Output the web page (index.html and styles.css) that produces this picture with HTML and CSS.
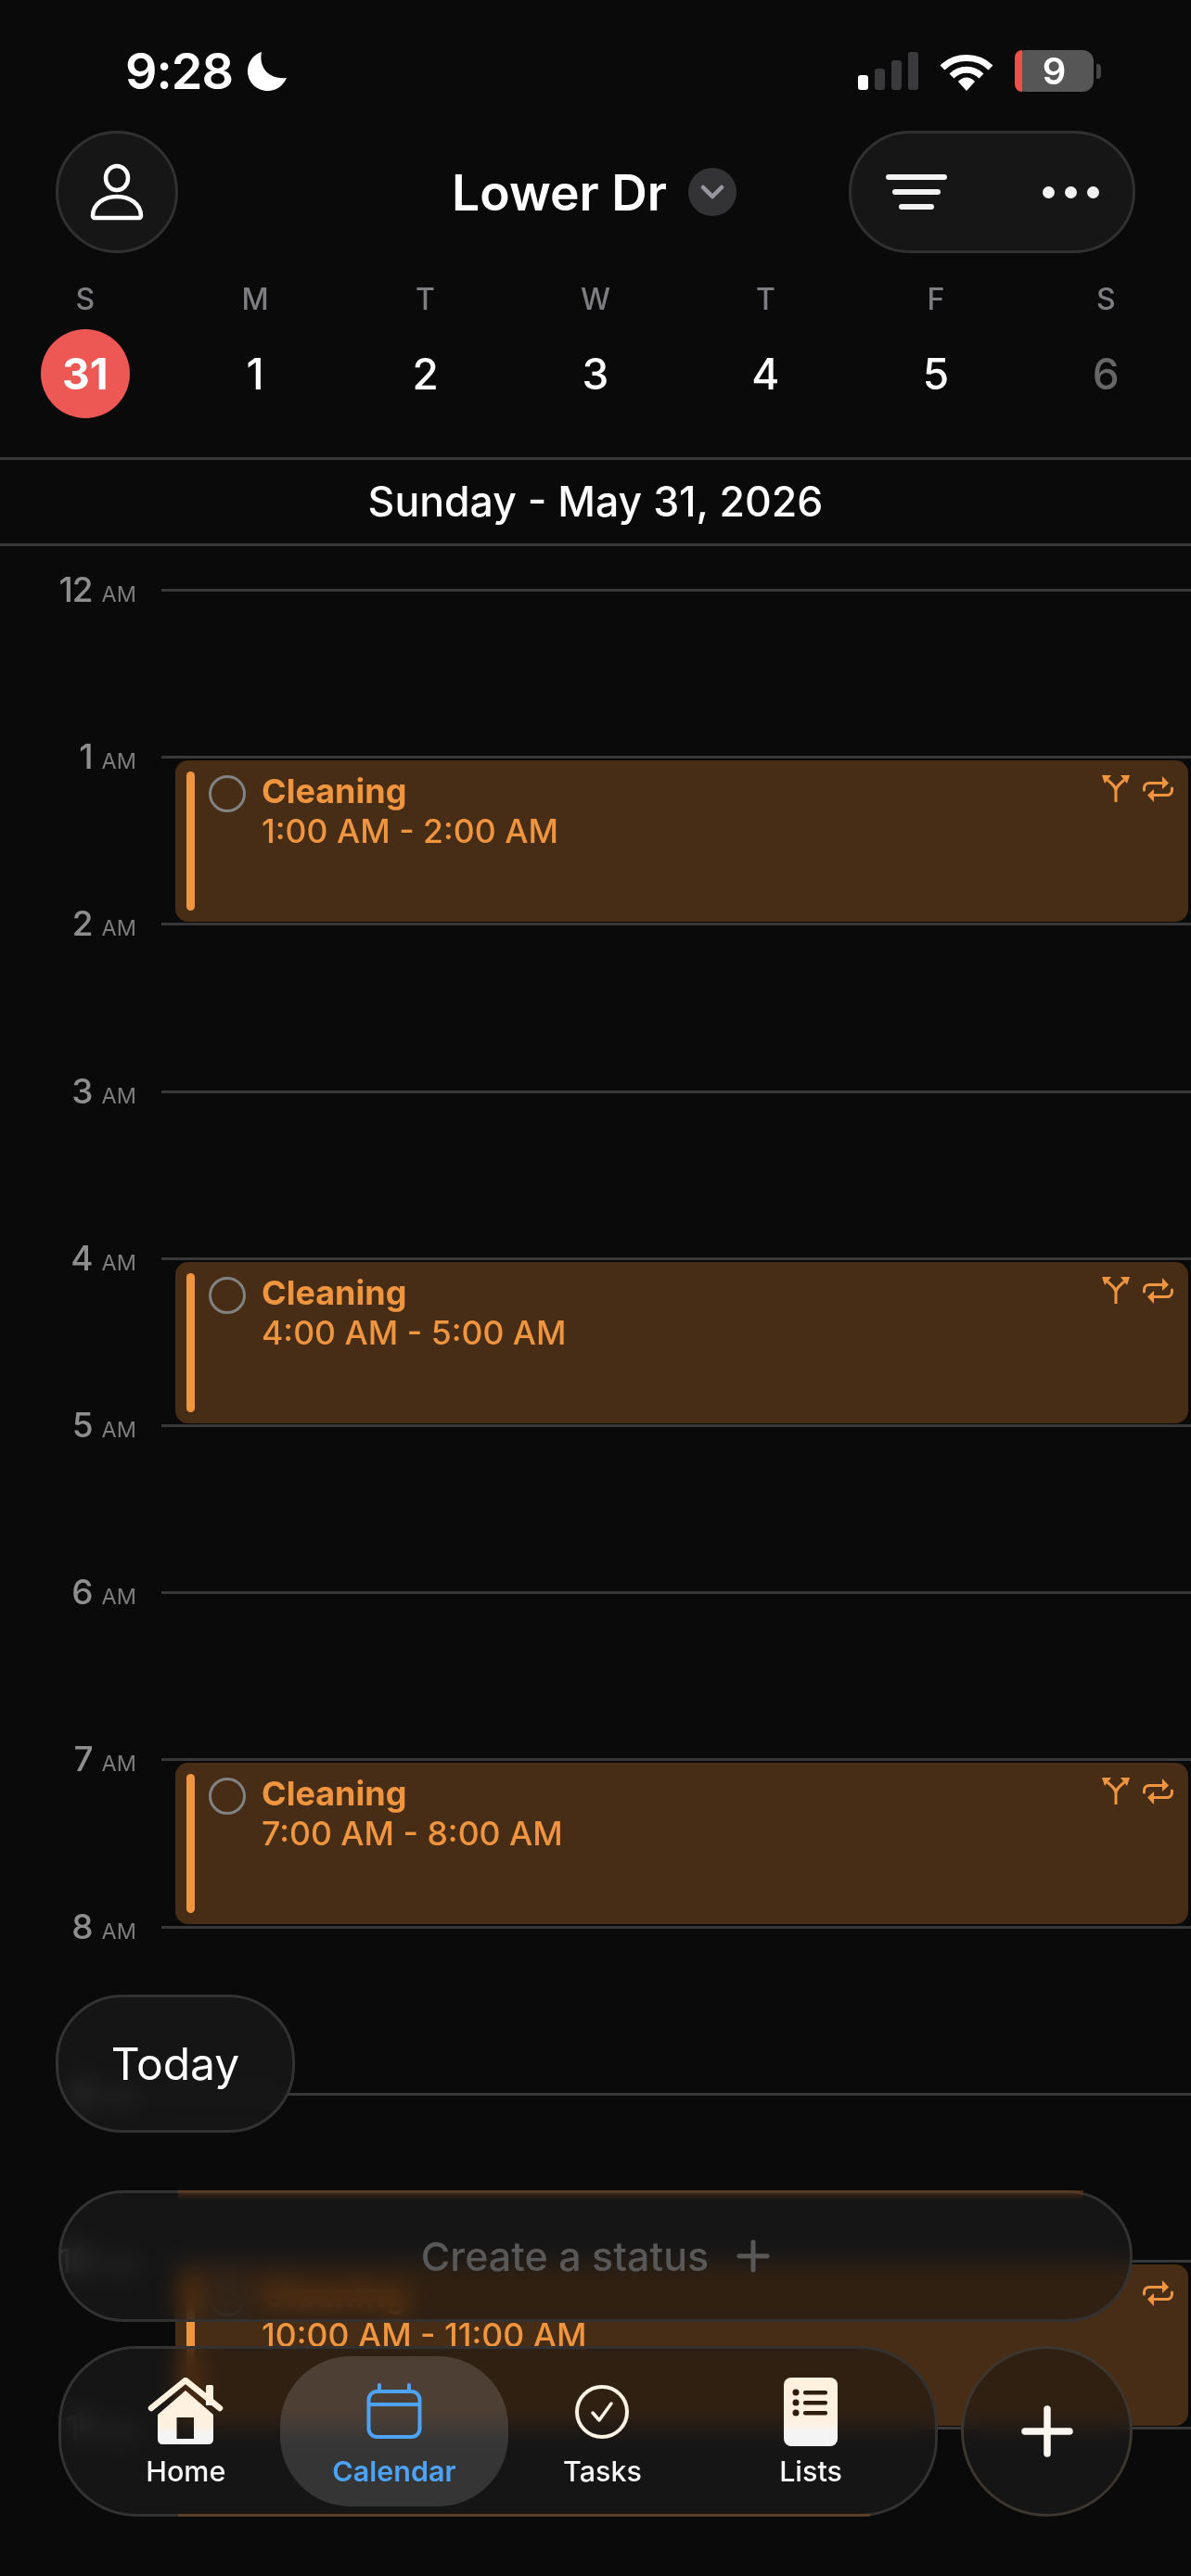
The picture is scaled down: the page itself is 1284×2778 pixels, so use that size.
FILE: index.html
```html
<!DOCTYPE html>
<html lang="en">
<head>
    <meta charset="UTF-8">
    <meta name="viewport" content="width=device-width, initial-scale=1.0">
    <title>Calendar</title>
    <link rel="stylesheet" href="styles.css">
</head>
<body>
    <svg class="defs" width="0" height="0">
        <defs>
            <linearGradient id="warm" x1="0" y1="0" x2="0" y2="1">
                <stop offset="0" stop-color="#fff1dd"/>
                <stop offset="0.65" stop-color="#fdf0e0"/>
                <stop offset="0.8" stop-color="#f4f4f4"/>
                <stop offset="1" stop-color="#f4f4f4"/>
            </linearGradient>
            <symbol id="icon-split" viewBox="0 0 30 30">
                <path d="M15 30V18C15 13 11 11 6 6M15 18C15 13 19 11 24 6" fill="none" stroke="currentColor" stroke-width="3"/>
                <path d="M0 1H10L3 10ZM30 1H20L27 10Z" fill="currentColor"/>
            </symbol>
            <symbol id="icon-repeat" viewBox="0 0 33 28">
                <path d="M1.5 15V13C1.5 9.500 4 7.500 7 7.500H22M31.500 13V15C31.500 18.500 29 20.500 26 20.500H11" fill="none" stroke="currentColor" stroke-width="3" stroke-linecap="round"/>
                <path d="M21 0L28 7.500L21 14ZM12 14L5 20.500L12 28Z" fill="currentColor"/>
            </symbol>
        </defs>
    </svg>

    <div class="status-bar">
        <div class="clock">
            <span>9:28</span>
            <svg class="moon" viewBox="0 0 42 42"><path d="M15 0C12 14 20 30 42 28C38 37 30 42 22 42C9 42 0 32 0 21C0 11 6 3 15 0Z" fill="#fff"/></svg>
        </div>
        <div class="status-icons">
            <div class="signal">
                <i class="bar-on h1"></i><i class="h2"></i><i class="h3"></i><i class="h4"></i>
            </div>
            <svg class="wifi" viewBox="0 0 58 42">
                <path d="M3 17C17 3 41 3 55 17" fill="none" stroke="#fff" stroke-width="7"/>
                <path d="M13 26C22 17 36 17 45 26" fill="none" stroke="#fff" stroke-width="7"/>
                <path d="M20 32C25 26 33 26 38 32L29 42Z" fill="#fff"/>
            </svg>
            <div class="battery"><span class="battery-level"></span><span class="battery-num">9</span></div>
            <span class="battery-tip"></span>
        </div>
    </div>

    <header class="top-row">
        <button class="glass-btn avatar">
            <svg width="60" height="62" viewBox="0 0 60 62" fill="none" stroke="#fff" stroke-width="4.500">
                <ellipse cx="30" cy="16" rx="12" ry="13"/>
                <path d="M4 57C4 44 16 36 30 36C44 36 56 44 56 57C56 58 55 59 54 59H6C5 59 4 58 4 57Z" stroke-linejoin="round"/>
            </svg>
        </button>
        <div class="title-wrap">
            <span class="title">Lower Dr</span>
            <span class="chevron">
                <svg width="26" height="16" viewBox="0 0 26 16" fill="none" stroke="#98989e" stroke-width="4.500" stroke-linecap="round" stroke-linejoin="round"><path d="M3 3L13 13L23 3"/></svg>
            </span>
        </div>
        <div class="glass-btn actions">
            <span class="filter-lines"><i class="l1"></i><i class="l2"></i><i class="l3"></i></span>
            <span class="dots"><i></i><i></i><i></i></span>
        </div>
    </header>

    <section class="week">
        <div class="day"><span class="letter">S</span><span class="num today-num">31</span></div>
        <div class="day"><span class="letter">M</span><span class="num">1</span></div>
        <div class="day"><span class="letter">T</span><span class="num">2</span></div>
        <div class="day"><span class="letter">W</span><span class="num">3</span></div>
        <div class="day"><span class="letter">T</span><span class="num">4</span></div>
        <div class="day"><span class="letter">F</span><span class="num">5</span></div>
        <div class="day"><span class="letter">S</span><span class="num dim">6</span></div>
    </section>

    <div class="date-line">Sunday - May 31, 2026</div>

    <main class="timeline">
        <div class="hour"><div class="hour-label">12<small>AM</small></div><div class="slot"></div></div>
        <div class="hour"><div class="hour-label">1<small>AM</small></div><div class="slot">
            <div class="event">
                <span class="event-bar"></span><span class="event-check"></span>
                <div class="event-text"><b>Cleaning</b><span>1:00 AM - 2:00 AM</span></div>
                <div class="event-icons">
                    <svg class="ic-split"><use href="#icon-split"/></svg>
                    <svg class="ic-repeat"><use href="#icon-repeat"/></svg>
                </div>
            </div>
        </div></div>
        <div class="hour"><div class="hour-label">2<small>AM</small></div><div class="slot"></div></div>
        <div class="hour"><div class="hour-label">3<small>AM</small></div><div class="slot"></div></div>
        <div class="hour"><div class="hour-label">4<small>AM</small></div><div class="slot">
            <div class="event">
                <span class="event-bar"></span><span class="event-check"></span>
                <div class="event-text"><b>Cleaning</b><span>4:00 AM - 5:00 AM</span></div>
                <div class="event-icons">
                    <svg class="ic-split"><use href="#icon-split"/></svg>
                    <svg class="ic-repeat"><use href="#icon-repeat"/></svg>
                </div>
            </div>
        </div></div>
        <div class="hour"><div class="hour-label">5<small>AM</small></div><div class="slot"></div></div>
        <div class="hour"><div class="hour-label">6<small>AM</small></div><div class="slot"></div></div>
        <div class="hour"><div class="hour-label">7<small>AM</small></div><div class="slot">
            <div class="event">
                <span class="event-bar"></span><span class="event-check"></span>
                <div class="event-text"><b>Cleaning</b><span>7:00 AM - 8:00 AM</span></div>
                <div class="event-icons">
                    <svg class="ic-split"><use href="#icon-split"/></svg>
                    <svg class="ic-repeat"><use href="#icon-repeat"/></svg>
                </div>
            </div>
        </div></div>
        <div class="hour"><div class="hour-label">8<small>AM</small></div><div class="slot"></div></div>
        <div class="hour"><div class="hour-label">9<small>AM</small></div><div class="slot"></div></div>
        <div class="hour"><div class="hour-label">10<small>AM</small></div><div class="slot">
            <div class="event">
                <span class="event-bar"></span><span class="event-check"></span>
                <div class="event-text"><b>Cleaning</b><span>10:00 AM - 11:00 AM</span></div>
                <div class="event-icons">
                    <svg class="ic-repeat"><use href="#icon-repeat"/></svg>
                </div>
            </div>
        </div></div>
        <div class="hour"><div class="hour-label">11<small>AM</small></div><div class="slot"></div></div>
    </main>

    <!-- floating glass controls over the timeline -->
    <div class="floating">
        <button class="glass today-btn">Today</button>
        <div class="glass create-status glow-top">
            <span>Create a status</span>
            <svg width="36" height="36" viewBox="0 0 36 36" stroke="#585858" stroke-width="5" stroke-linecap="round"><path d="M18 3V33M3 18H33"/></svg>
        </div>
        <div class="bottom-row">
            <nav class="glass tabbar glow-bottom">
                <a class="tab">
                    <svg class="tab-icon" width="82" height="74" viewBox="0 0 82 74">
                        <path d="M63 10C63 8.500 64 8 65 8H69C70 8 71 8.500 71 10V30H63Z" fill="url(#warm)"/>
                        <path d="M41 14L71 40V66C71 70 69 72 65 72H17C13 72 11 70 11 66V40ZM31.500 43V66H50V43Z" fill="url(#warm)" fill-rule="evenodd"/>
                        <path d="M4 33L41 3L78 33" fill="none" stroke="#fff1dd" stroke-width="6.500" stroke-linecap="round" stroke-linejoin="round"/>
                    </svg>
                    <span>Home</span>
                </a>
                <a class="tab tab-active">
                    <svg class="tab-icon" width="60" height="60" viewBox="0 0 60 60" fill="none" stroke="#4da3f5" stroke-width="4">
                        <rect x="2.500" y="8" width="55" height="49" rx="9"/>
                        <path d="M2.500 22H57.500"/>
                        <path d="M14 1V8M46 1V8" stroke-linecap="round"/>
                    </svg>
                    <span>Calendar</span>
                </a>
                <a class="tab">
                    <svg class="tab-icon" width="60" height="60" viewBox="0 0 60 60" fill="none">
                        <circle cx="30" cy="30" r="27" stroke="#fdf3e6" stroke-width="4"/>
                        <path d="M20 31L27 39L40 21" stroke="#fdf3e6" stroke-width="3.500" stroke-linecap="round" stroke-linejoin="round"/>
                    </svg>
                    <span>Tasks</span>
                </a>
                <a class="tab">
                    <svg class="tab-icon" width="58" height="74" viewBox="0 0 58 74">
                        <rect width="58" height="74" rx="8" fill="url(#warm)"/>
                        <g fill="#2e1c0c">
                            <circle cx="13" cy="16" r="3.500"/>
                            <circle cx="13" cy="27" r="3.500"/>
                            <circle cx="13" cy="38" r="3.500"/>
                            <rect x="21" y="14" width="26" height="4.500" rx="2"/>
                            <rect x="21" y="25" width="26" height="4.500" rx="2"/>
                            <rect x="21" y="36" width="26" height="4.500" rx="2"/>
                        </g>
                    </svg>
                    <span>Lists</span>
                </a>
            </nav>
            <button class="glass fab">
                <svg width="56" height="56" viewBox="0 0 56 56" stroke="#fbf6f0" stroke-width="7.500" stroke-linecap="round"><path d="M28 4V52M4 28H52"/></svg>
            </button>
        </div>
    </div>
</body>
</html>
```

FILE: styles.css
```css
* {
    box-sizing: border-box;
}

html, body {
    margin: 0;
    height: 2778px;
}

body {
    position: relative;
    overflow: hidden;
    background-color: #0a0a0b;
    color: #fff;
    font-family: 'Inter', 'Noto Sans', sans-serif;
}

button {
    font-family: inherit;
    color: inherit;
    padding: 0;
}

.defs {
    display: block;
    height: 0;
}

/* Phone status bar */
.status-bar {
    height: 141px;
    padding: 12px 97px 0 135px;
    display: flex;
    justify-content: space-between;
    align-items: center;
}

.clock {
    display: flex;
    align-items: center;
    gap: 16px;
    font-size: 54px;
    font-weight: 600;
    letter-spacing: -1px;
}

.moon {
    width: 42px;
    height: 42px;
}

.status-icons {
    display: flex;
    align-items: center;
}

.signal {
    display: flex;
    align-items: flex-end;
    gap: 7px;
    height: 41px;
    margin-right: 23px;
}

.signal i {
    width: 11px;
    background-color: #3a3a3c;
    border-radius: 3px;
}

.signal .h1 { height: 16px; }
.signal .h2 { height: 23px; }
.signal .h3 { height: 32px; }
.signal .h4 { height: 41px; }
.signal .bar-on { background-color: #fff; }

.wifi {
    width: 58px;
    height: 42px;
    margin-right: 23px;
}

.battery {
    position: relative;
    width: 85px;
    height: 45px;
    background-color: #565656;
    border-radius: 12px;
    display: flex;
    align-items: center;
    justify-content: center;
    line-height: 45px;
    font-size: 40px;
    font-weight: 600;
}

.battery-level {
    position: absolute;
    left: 0;
    top: 0;
    bottom: 0;
    width: 8px;
    background-color: #ef4f4b;
    border-radius: 12px 0 0 12px;
}

.battery-tip {
    width: 5px;
    height: 16px;
    margin-left: 3px;
    background-color: #444;
    border-radius: 0 4px 4px 0;
}

/* Avatar, title, filter pill */
.top-row {
    height: 132px;
    padding: 0 60px;
    display: grid;
    grid-template-columns: 1fr auto 1fr;
    align-items: center;
}

.glass-btn {
    height: 132px;
    background-color: #161616;
    border: 3px solid #303030;
    border-radius: 66px;
}

.avatar {
    width: 132px;
    display: flex;
    align-items: center;
    justify-content: center;
}

.title-wrap {
    display: flex;
    align-items: center;
    gap: 23px;
    margin-right: 3px;
}

.title {
    font-size: 53.4px;
    font-weight: 600;
}

.chevron {
    width: 52px;
    height: 52px;
    border-radius: 50%;
    background-color: #333336;
    display: flex;
    align-items: center;
    justify-content: center;
}

.actions {
    justify-self: end;
    width: 309px;
    display: flex;
    align-items: center;
    justify-content: space-between;
    padding: 0 36px 0 37px;
}

.filter-lines {
    width: 66px;
    display: flex;
    flex-direction: column;
    align-items: center;
    gap: 10px;
}

.filter-lines i {
    height: 6px;
    background-color: #f2f2f2;
    border-radius: 3px;
}

.filter-lines .l1 { width: 66px; }
.filter-lines .l2 { width: 52px; }
.filter-lines .l3 { width: 38px; }

.dots {
    display: flex;
    gap: 11px;
}

.dots i {
    width: 13px;
    height: 13px;
    background-color: #f2f2f2;
    border-radius: 50%;
}

/* Week strip */
.week {
    height: 223px;
    padding-top: 30px;
    display: grid;
    grid-template-columns: repeat(7, 1fr);
    border-bottom: 3px solid #38383a;
}

.day {
    display: flex;
    flex-direction: column;
    align-items: center;
    gap: 12px;
}

.letter {
    height: 40px;
    line-height: 40px;
    font-size: 32px;
    font-weight: 500;
    color: #7d7d82;
}

.num {
    width: 96px;
    height: 96px;
    display: flex;
    align-items: center;
    justify-content: center;
    font-size: 46px;
    font-weight: 500;
}

.today-num {
    background-color: #ee5854;
    border-radius: 50%;
    font-weight: 700;
}

.num.dim {
    color: #666;
}

.date-line {
    height: 93px;
    padding-bottom: 1px;
    display: flex;
    align-items: center;
    justify-content: center;
    border-bottom: 3px solid #38383a;
    font-size: 44.6px;
    font-weight: 500;
}

/* Day timeline */
.timeline {
    padding-top: 46px;
}

.hour {
    height: 180.2px;
    display: flex;
}

.hour-label {
    width: 174px;
    height: 48px;
    margin-top: -23px;
    padding-right: 27px;
    display: flex;
    align-items: baseline;
    justify-content: flex-end;
    gap: 10px;
    line-height: 48px;
    font-size: 37px;
    font-weight: 500;
    letter-spacing: -1px;
    color: #8e8e8e;
}

.hour-label small {
    font-size: 23.5px;
    font-weight: 400;
    letter-spacing: 0;
    color: #7d7d7d;
}

.slot {
    flex: 1;
    padding: 2px 3px 0 15px;
    border-top: 3px solid #38383a;
}

.event {
    height: 174px;
    padding: 12px 16px 12px 12px;
    display: flex;
    background-color: #482d16;
    border-radius: 14px;
    color: #f0953f;
}

.event-bar {
    width: 9px;
    background-color: #f0953f;
    border-radius: 5px;
}

.event-check {
    width: 40px;
    height: 40px;
    margin: 4px 0 0 15px;
    border: 3.5px solid #828282;
    border-radius: 50%;
}

.event-text {
    margin-left: 17px;
    flex: 1;
    display: flex;
    flex-direction: column;
    font-size: 35.6px;
    font-weight: 500;
}

.event-text b {
    height: 42px;
    line-height: 42px;
    font-size: 36px;
    font-weight: 700;
}

.event-text span {
    line-height: 46px;
}

.event-icons {
    display: flex;
    gap: 14px;
    height: 30px;
    margin-top: 3px;
}

.ic-split {
    width: 30px;
    height: 30px;
}

.ic-repeat {
    width: 33px;
    height: 28px;
    margin-top: 2px;
}

/* Floating glass controls */
.floating {
    position: absolute;
    left: 60px;
    right: 60px;
    bottom: 64px;
    display: flex;
    flex-direction: column;
    align-items: flex-start;
}

.glass {
    position: relative;
    background-color: rgba(28, 28, 28, 0.66);
    -webkit-backdrop-filter: blur(12px) saturate(1.8);
    backdrop-filter: blur(12px) saturate(1.8);
    border: 3px solid #343230;
}

.today-btn {
    width: 258px;
    height: 149px;
    border-radius: 72px;
    font-size: 48px;
    font-weight: 400;
    margin-bottom: 62px;
}

.create-status {
    width: 1158px;
    height: 142px;
    margin: 0 0 26px 3px;
    border-radius: 71px;
    display: flex;
    align-items: center;
    justify-content: center;
    gap: 30px;
    font-size: 43px;
    font-weight: 500;
    color: #585858;
}

.glow-top::before {
    content: "";
    position: absolute;
    left: 126px;
    right: 50px;
    top: -3px;
    height: 10px;
    background: linear-gradient(to bottom, rgba(120, 70, 25, 0.55), rgba(120, 70, 25, 0));
}

.glow-bottom::before {
    content: "";
    position: absolute;
    left: 126px;
    right: 70px;
    bottom: -3px;
    height: 3px;
    background-color: rgba(130, 78, 30, 0.5);
}

.bottom-row {
    margin-left: 3px;
    display: flex;
    gap: 25px;
}

.tabbar {
    width: 948px;
    height: 184px;
    padding: 8px 0 0 22px;
    border-radius: 84px;
    display: grid;
    grid-template-columns: repeat(4, 224.6px);
    align-items: start;
}

.tab {
    height: 162px;
    padding-top: 23px;
    display: flex;
    flex-direction: column;
    align-items: center;
    font-size: 30.5px;
    font-weight: 500;
    color: #f6f6f6;
}

.tab-icon {
    height: 74px;
    margin-bottom: 9px;
}

.tab span {
    line-height: 36px;
}

.tab-active {
    margin: 0 -11px;
    background-color: rgba(255, 255, 255, 0.14);
    border-radius: 76px;
    color: #4da3f5;
    font-weight: 600;
}

.fab {
    width: 185px;
    height: 184px;
    border-color: #3d362f;
    border-radius: 50%;
    display: flex;
    align-items: center;
    justify-content: center;
}
```
